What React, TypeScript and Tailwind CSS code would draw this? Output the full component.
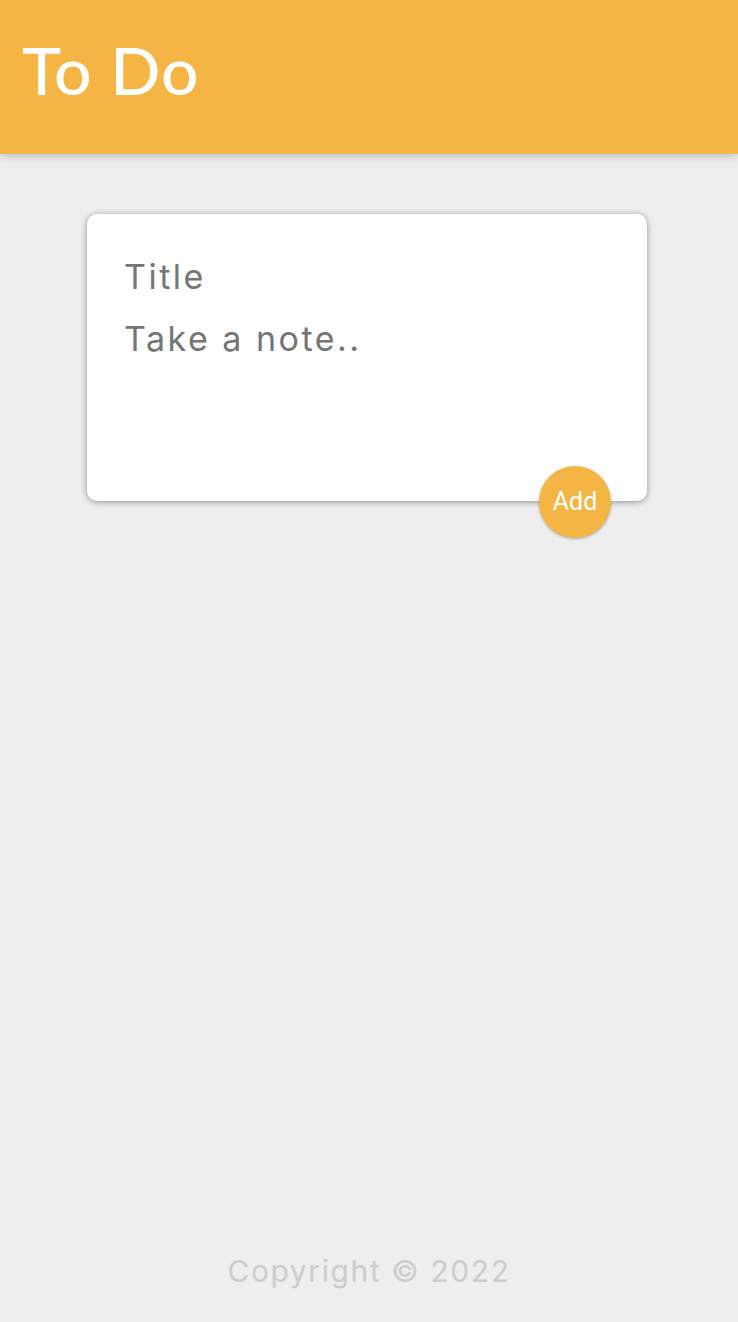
import React from 'react';

const App: React.FC = () => {
  return (
    <div className="min-h-[1322px] bg-[#eeeeee] flex flex-col" style={{ fontFamily: 'Inter, "Open Sans", sans-serif' }}>
      <header className="h-[154px] bg-[#f5b544] shadow-[0_0_10px_0_rgba(0,0,0,0.3)] px-[22px] flex items-center">
        <h1 className="text-white text-[66px] font-medium leading-none tracking-[1px] -mt-[14px]" style={{ fontFamily: 'Lato, sans-serif' }}>
          To Do
        </h1>
      </header>

      <main className="flex-1 pt-[60px] pl-[87px]">
        <form className="relative w-[560px] h-[287px] bg-white rounded-[10px] shadow-[0_1px_6px_rgba(0,0,0,0.4)] px-[37px] pt-[32px]">
          <div className="text-[#757575] text-[34px] leading-[62px] tracking-[2.5px]">Title</div>
          <div className="text-[#757575] text-[34px] leading-[62px] tracking-[2.5px]">Take a note..</div>
          <button
            type="button"
            className="absolute right-[36px] -bottom-[37px] w-[72px] h-[72px] rounded-full bg-[#f5b544] text-white text-[25px] font-normal shadow-[0_1px_3px_rgba(0,0,0,0.3)] flex items-center justify-center"
            style={{ fontFamily: 'Roboto, sans-serif' }}
          >
            Add
          </button>
        </form>
      </main>

      <footer className="h-[100px] flex items-center justify-center pb-[2px]">
        <p className="text-[#cccccc] text-[30px] tracking-[1.6px]">Copyright © 2022</p>
      </footer>
    </div>
  );
};

export default App;
